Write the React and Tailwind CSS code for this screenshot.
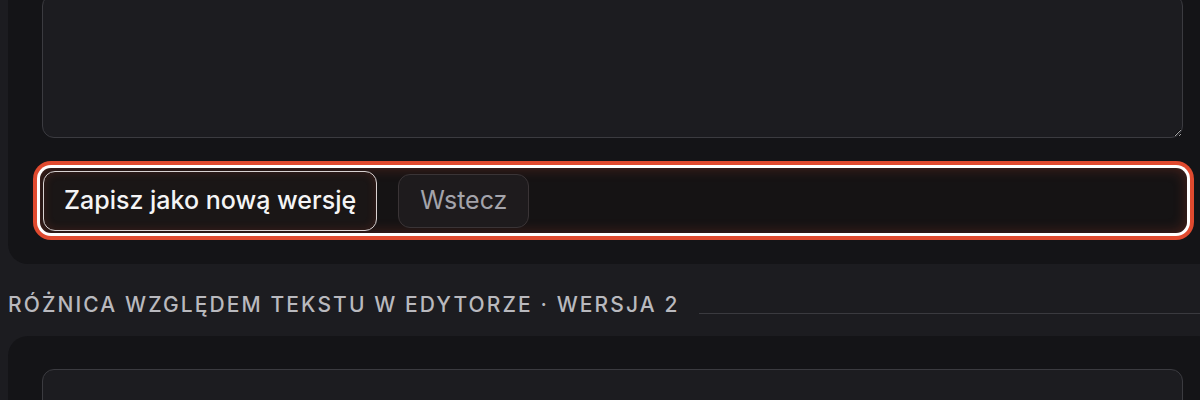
import React from "react";

const font = { fontFamily: "Inter, 'Noto Sans', sans-serif" };

export default function App() {
  return (
    <div
      className="w-[1200px] h-[400px] overflow-hidden bg-[#1c1c20] text-[#e8e8ea]"
      style={font}
    >
      {/* Editor card */}
      <div className="ml-2 -mt-[40px] w-[1209px] rounded-[20px] bg-[#141417] px-[34px] pt-[34px] pb-[31px]">
        <textarea
          className="block w-full h-[144px] rounded-[12px] border border-[#3b3b40] bg-[#1c1c20] resize-y outline-none [color-scheme:dark]"
          defaultValue=""
        />

        {/* Action row (focused) */}
        <div className="mt-[30px] -ml-[2px] w-[1147px] h-[65px] flex items-center gap-[21px] px-[3px] rounded-[11px] bg-[#151314] shadow-[0_0_0_3px_#ffffff,0_0_0_7px_#e04a2f,inset_0_0_14px_rgba(224,74,47,0.28)]">
          <button className="h-[60px] px-[20px] rounded-[12px] border border-[#d9d2d2] bg-[#1a1616] text-[25px] font-medium text-[#f4f4f5] shadow-[inset_0_0_10px_rgba(224,74,47,0.18)]">
            Zapisz jako nową wersję
          </button>
          <button className="h-[54px] px-[21px] rounded-[12px] border border-[#3a3436] bg-[#1e1b1d] text-[25px] text-[#a4a4ab]">
            Wstecz
          </button>
        </div>
      </div>

      {/* Section header */}
      <div className="mt-[27px] ml-2 flex items-start gap-5">
        <h2 className="shrink-0 text-[21px] leading-[28px] font-medium uppercase tracking-[0.1em] text-[#b9b9be]">
          Różnica względem tekstu w edytorze · Wersja 2
        </h2>
        <div className="mt-[22px] h-px flex-1 bg-[#3a3a3f]" />
      </div>

      {/* Diff card */}
      <div className="mt-[17px] ml-2 w-[1209px] rounded-[20px] bg-[#141417] px-[34px] pt-[33px] pb-8">
        <div className="rounded-[12px] border border-[#3b3b40] bg-[#1c1c20] px-[64px] pt-[24px] pb-6">
          <div className="flex justify-between text-[20px] leading-[28px] text-[#d4d4d8]">
            <span>lł?</span>
            <span className="mr-[110px]">łt</span>
          </div>
        </div>
      </div>
    </div>
  );
}
